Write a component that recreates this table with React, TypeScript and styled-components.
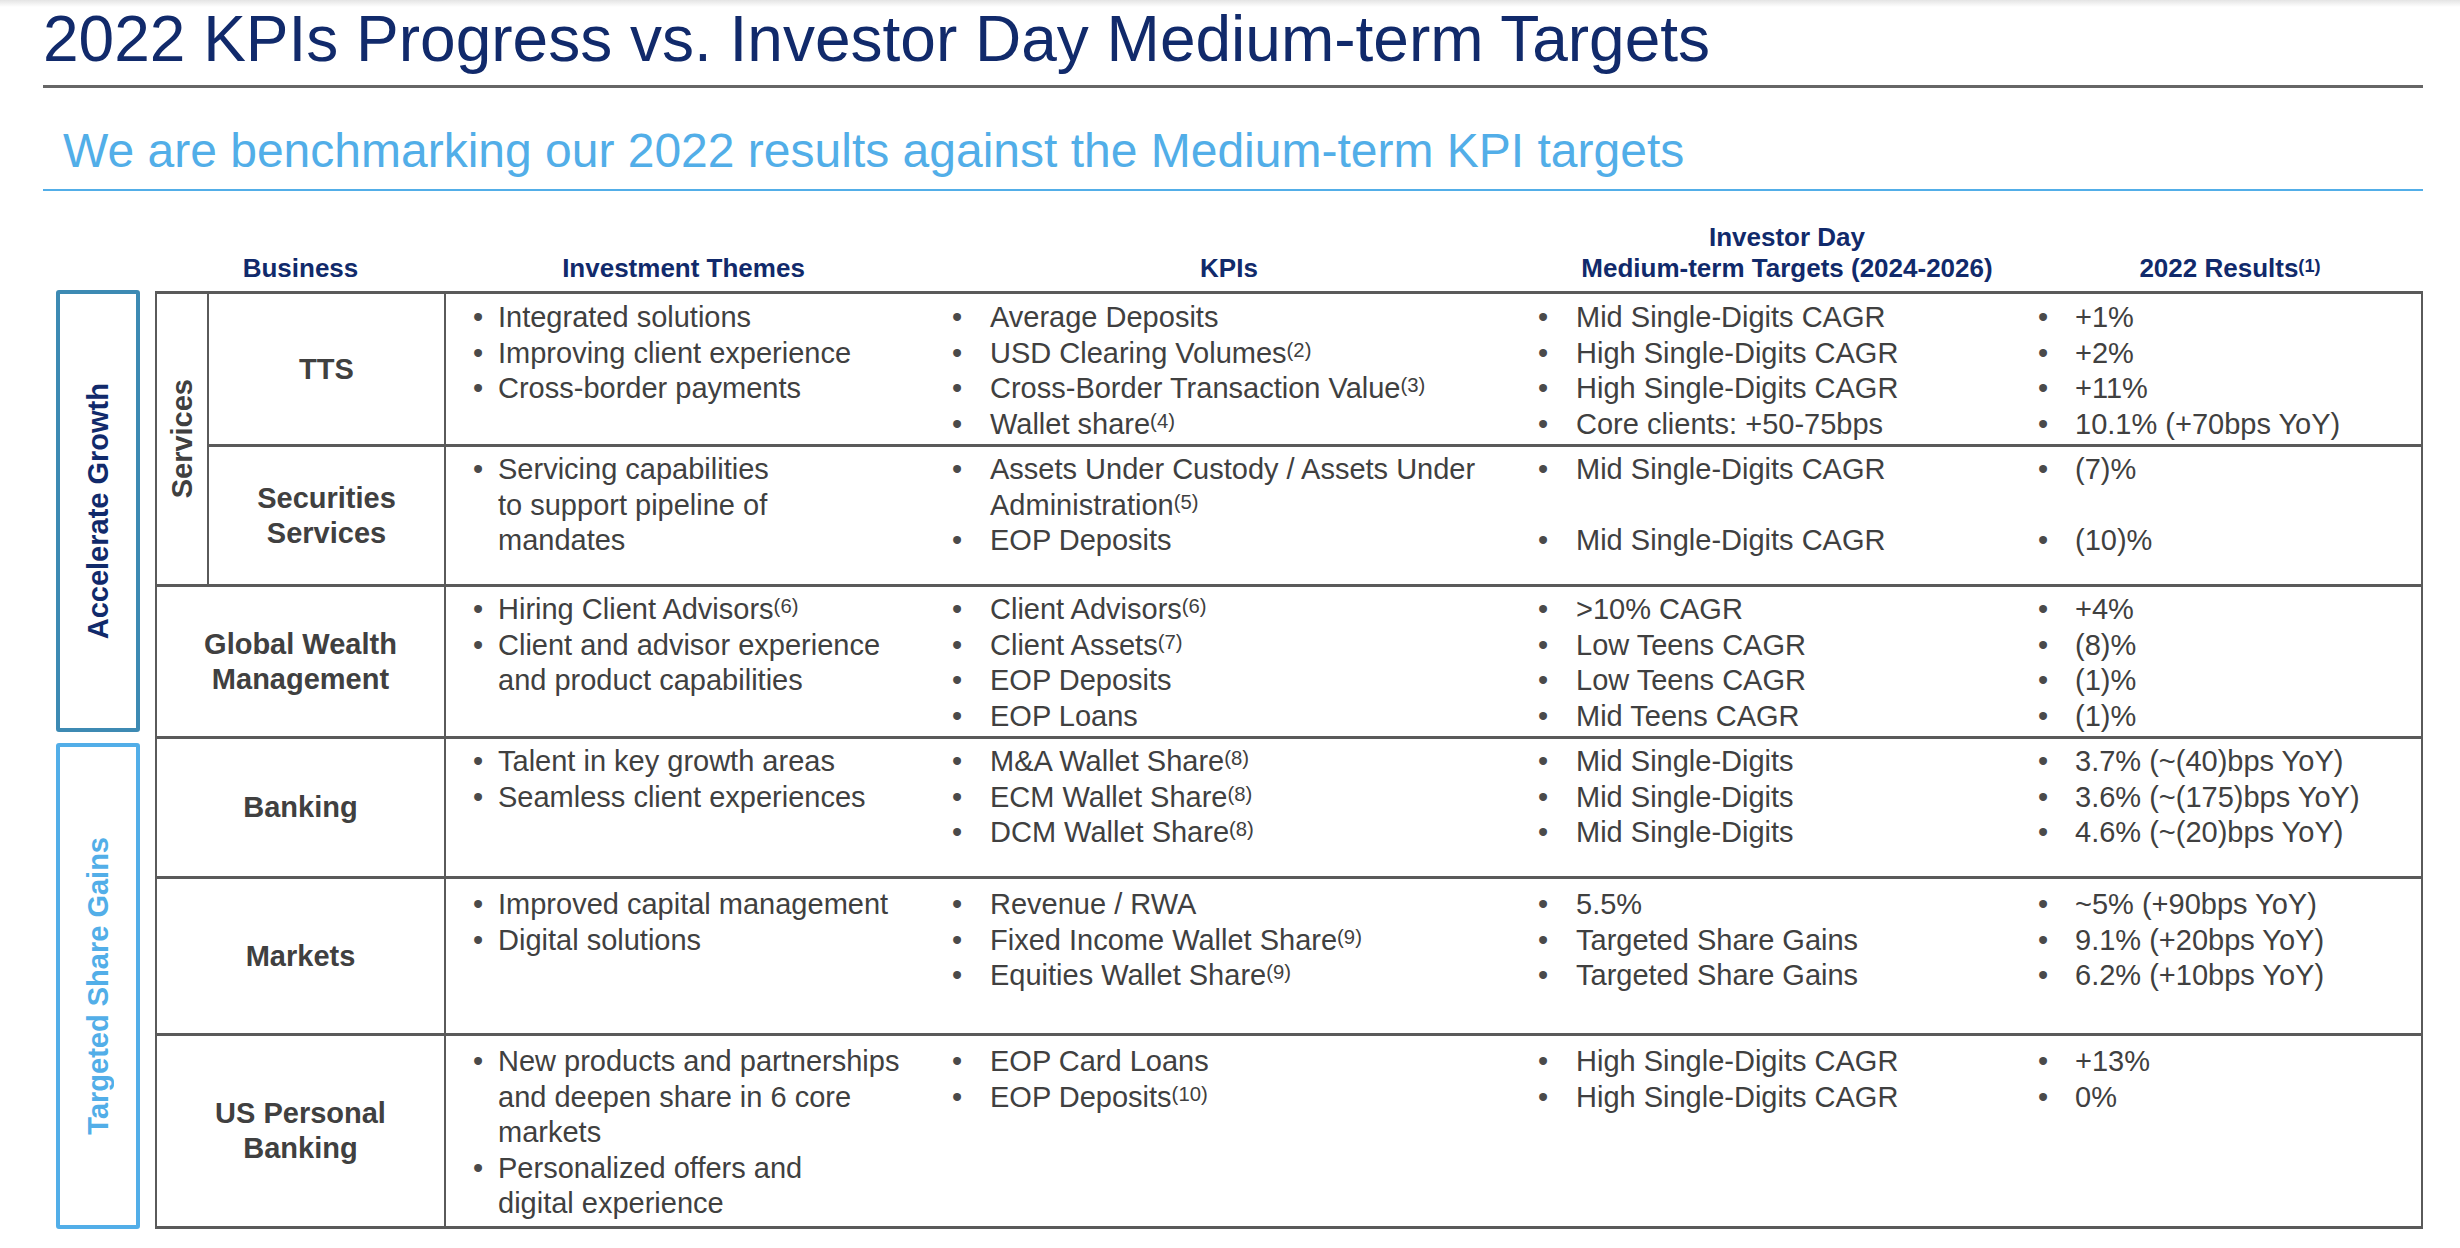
import React from "react";
import styled, { createGlobalStyle } from "styled-components";

const NAVY = "#112a6b";
const SKY = "#52aee8";
const TEAL = "#3d8ab3";
const INK = "#404040";
const RULE = "#5a5a5a";
const LINE_H = 35.5;

const GlobalStyle = createGlobalStyle`
  html, body {
    margin: 0;
    padding: 0;
    background: #fff;
  }
  body {
    font-family: "Liberation Sans", Arial, sans-serif;
  }
`;

const Page = styled.div`
  width: 2460px;
  height: 1248px;
  box-sizing: border-box;
  padding: 0 37px 0 43px;
  background: linear-gradient(#e4e4e4, #fff 7px);
  overflow: hidden;
`;

const Title = styled.h1`
  margin: 0;
  padding: 7px 0 14px;
  font-size: 64px;
  line-height: 64px;
  font-weight: 400;
  color: ${NAVY};
  border-bottom: 3px solid #666;
  white-space: nowrap;
`;

const Subtitle = styled.h2`
  margin: 39px 0 0;
  padding: 0 0 15px 20px;
  font-size: 48px;
  line-height: 47px;
  font-weight: 400;
  color: ${SKY};
  border-bottom: 2px solid ${SKY};
  white-space: nowrap;
`;

const Main = styled.div`
  display: grid;
  grid-template-columns: 84px 1fr;
  column-gap: 15px;
  margin-left: 13px;
`;

const HeaderRow = styled.div`
  grid-column: 2;
  display: grid;
  grid-template-columns: 291px 475px 616px 500px 1fr;
  align-items: end;
  margin: 31px 0 7px;
`;

const HeaderCell = styled.div`
  text-align: center;
  font-size: 26px;
  line-height: 31px;
  font-weight: 700;
  color: ${NAVY};
  white-space: nowrap;
`;

const SideColumn = styled.div`
  display: flex;
  flex-direction: column;
  gap: 11px;
  margin-top: -1px;
`;

const SideBox = styled.div<{ $border: string; $h: number }>`
  height: ${(p) => p.$h}px;
  box-sizing: border-box;
  border: 4px solid ${(p) => p.$border};
  border-radius: 3px;
  display: flex;
  align-items: center;
  justify-content: center;
`;

const VerticalLabel = styled.span<{ $color: string }>`
  writing-mode: vertical-rl;
  transform: rotate(180deg);
  font-size: 29px;
  font-weight: 700;
  color: ${(p) => p.$color};
  white-space: nowrap;
`;

const Table = styled.div`
  border-top: 3px solid ${RULE};
  border-left: 2px solid ${RULE};
  border-right: 2px solid ${RULE};
  display: flex;
  flex-direction: column;
`;

const Group = styled.div`
  display: flex;
  border-bottom: 3px solid ${RULE};
`;

const GroupLabel = styled.div`
  width: 50px;
  border-right: 2px solid ${RULE};
  display: flex;
  align-items: center;
  justify-content: center;
  color: ${INK};
`;

const GroupRows = styled.div`
  flex: 1;
  display: flex;
  flex-direction: column;
`;

const Row = styled.div<{ $h: number; $biz: number; $last?: boolean }>`
  display: grid;
  grid-template-columns: ${(p) => p.$biz}px 498px 586px 500px 1fr;
  height: ${(p) => p.$h}px;
  box-sizing: border-box;
  border-bottom: ${(p) => (p.$last ? "none" : `3px solid ${RULE}`)};
`;

const BusinessCell = styled.div`
  border-right: 2px solid ${RULE};
  display: flex;
  align-items: center;
  justify-content: center;
  text-align: center;
  font-size: 29px;
  line-height: 35px;
  font-weight: 700;
  color: ${INK};
`;

const ListCell = styled.div<{ $pad: number; $left: number }>`
  padding: ${(p) => p.$pad}px 0 0 ${(p) => p.$left}px;
  display: flex;
  flex-direction: column;
`;

const Item = styled.div<{ $lines: number }>`
  display: flex;
  min-height: ${(p) => p.$lines * LINE_H}px;
  font-size: 29px;
  line-height: ${LINE_H}px;
  color: ${INK};
  white-space: nowrap;
`;

const Bullet = styled.span<{ $w: number }>`
  flex: none;
  width: ${(p) => p.$w}px;
  color: #4a4a4a;
`;

const Sup = styled.sup`
  font-size: 0.7em;
  line-height: 0;
  vertical-align: 0.3em;
`;

type Entry = React.ReactNode | { text: React.ReactNode; lines: number };

type RowData = {
  business: React.ReactNode;
  height: number;
  pad: number;
  themes: Entry[];
  kpis: Entry[];
  targets: Entry[];
  results: Entry[];
};

const fn = (n: number) => <Sup>({n})</Sup>;

const List = ({ items, pad, left, bullet }: { items: Entry[]; pad: number; left: number; bullet: number }) => (
  <ListCell $pad={pad} $left={left}>
    {items.map((entry, i) => {
      const boxed = entry !== null && typeof entry === "object" && "lines" in (entry as object);
      const text = boxed ? (entry as { text: React.ReactNode }).text : (entry as React.ReactNode);
      const lines = boxed ? (entry as { lines: number }).lines : 1;
      return (
        <Item key={i} $lines={lines}>
          <Bullet $w={bullet}>•</Bullet>
          <span>{text}</span>
        </Item>
      );
    })}
  </ListCell>
);

const BodyRow = ({ row, biz, last }: { row: RowData; biz: number; last?: boolean }) => (
  <Row $h={row.height} $biz={biz} $last={last}>
    <BusinessCell>{row.business}</BusinessCell>
    <List items={row.themes} pad={row.pad} left={27} bullet={25} />
    <List items={row.kpis} pad={row.pad} left={8} bullet={38} />
    <List items={row.targets} pad={row.pad} left={8} bullet={38} />
    <List items={row.results} pad={row.pad} left={8} bullet={37} />
  </Row>
);

const servicesRows: RowData[] = [
  {
    business: "TTS",
    height: 153,
    pad: 6,
    themes: ["Integrated solutions", "Improving client experience", "Cross-border payments"],
    kpis: [
      "Average Deposits",
      <>USD Clearing Volumes{fn(2)}</>,
      <>Cross-Border Transaction Value{fn(3)}</>,
      <>Wallet share{fn(4)}</>,
    ],
    targets: ["Mid Single-Digits CAGR", "High Single-Digits CAGR", "High Single-Digits CAGR", "Core clients: +50-75bps"],
    results: ["+1%", "+2%", "+11%", "10.1% (+70bps YoY)"],
  },
  {
    business: (
      <>
        Securities
        <br />
        Services
      </>
    ),
    height: 137,
    pad: 5,
    themes: [
      <>
        Servicing capabilities
        <br />
        to support pipeline of
        <br />
        mandates
      </>,
    ],
    kpis: [
      <>
        Assets Under Custody / Assets Under
        <br />
        Administration{fn(5)}
      </>,
      "EOP Deposits",
    ],
    targets: [{ text: "Mid Single-Digits CAGR", lines: 2 }, "Mid Single-Digits CAGR"],
    results: [{ text: "(7)%", lines: 2 }, "(10)%"],
  },
];

const otherRows: RowData[] = [
  {
    business: (
      <>
        Global Wealth
        <br />
        Management
      </>
    ),
    height: 152,
    pad: 5,
    themes: [
      <>Hiring Client Advisors{fn(6)}</>,
      <>
        Client and advisor experience
        <br />
        and product capabilities
      </>,
    ],
    kpis: [<>Client Advisors{fn(6)}</>, <>Client Assets{fn(7)}</>, "EOP Deposits", "EOP Loans"],
    targets: [">10% CAGR", "Low Teens CAGR", "Low Teens CAGR", "Mid Teens CAGR"],
    results: ["+4%", "(8)%", "(1)%", "(1)%"],
  },
  {
    business: "Banking",
    height: 140,
    pad: 5,
    themes: ["Talent in key growth areas", "Seamless client experiences"],
    kpis: [<>M&amp;A Wallet Share{fn(8)}</>, <>ECM Wallet Share{fn(8)}</>, <>DCM Wallet Share{fn(8)}</>],
    targets: ["Mid Single-Digits", "Mid Single-Digits", "Mid Single-Digits"],
    results: ["3.7% (~(40)bps YoY)", "3.6% (~(175)bps YoY)", "4.6% (~(20)bps YoY)"],
  },
  {
    business: "Markets",
    height: 157,
    pad: 8,
    themes: ["Improved capital management", "Digital solutions"],
    kpis: ["Revenue / RWA", <>Fixed Income Wallet Share{fn(9)}</>, <>Equities Wallet Share{fn(9)}</>],
    targets: ["5.5%", "Targeted Share Gains", "Targeted Share Gains"],
    results: ["~5% (+90bps YoY)", "9.1% (+20bps YoY)", "6.2% (+10bps YoY)"],
  },
  {
    business: (
      <>
        US Personal
        <br />
        Banking
      </>
    ),
    height: 193,
    pad: 8,
    themes: [
      <>
        New products and partnerships
        <br />
        and deepen share in 6 core
        <br />
        markets
      </>,
      <>
        Personalized offers and
        <br />
        digital experience
      </>,
    ],
    kpis: ["EOP Card Loans", <>EOP Deposits{fn(10)}</>],
    targets: ["High Single-Digits CAGR", "High Single-Digits CAGR"],
    results: ["+13%", "0%"],
  },
];

export default function App() {
  return (
    <>
      <GlobalStyle />
      <Page>
        <Title>2022 KPIs Progress vs. Investor Day Medium-term Targets</Title>
        <Subtitle>We are benchmarking our 2022 results against the Medium-term KPI targets</Subtitle>
        <Main>
          <HeaderRow>
            <HeaderCell>Business</HeaderCell>
            <HeaderCell>Investment Themes</HeaderCell>
            <HeaderCell>KPIs</HeaderCell>
            <HeaderCell>
              Investor Day
              <br />
              Medium-term Targets (2024-2026)
            </HeaderCell>
            <HeaderCell>2022 Results{fn(1)}</HeaderCell>
          </HeaderRow>
          <SideColumn>
            <SideBox $border={TEAL} $h={442}>
              <VerticalLabel $color={NAVY}>Accelerate Growth</VerticalLabel>
            </SideBox>
            <SideBox $border={SKY} $h={486}>
              <VerticalLabel $color={SKY}>Targeted Share Gains</VerticalLabel>
            </SideBox>
          </SideColumn>
          <Table>
            <Group>
              <GroupLabel>
                <VerticalLabel $color={INK}>Services</VerticalLabel>
              </GroupLabel>
              <GroupRows>
                {servicesRows.map((row, i) => (
                  <BodyRow key={i} row={row} biz={237} last={i === servicesRows.length - 1} />
                ))}
              </GroupRows>
            </Group>
            {otherRows.map((row, i) => (
              <BodyRow key={i} row={row} biz={289} />
            ))}
          </Table>
        </Main>
      </Page>
    </>
  );
}
